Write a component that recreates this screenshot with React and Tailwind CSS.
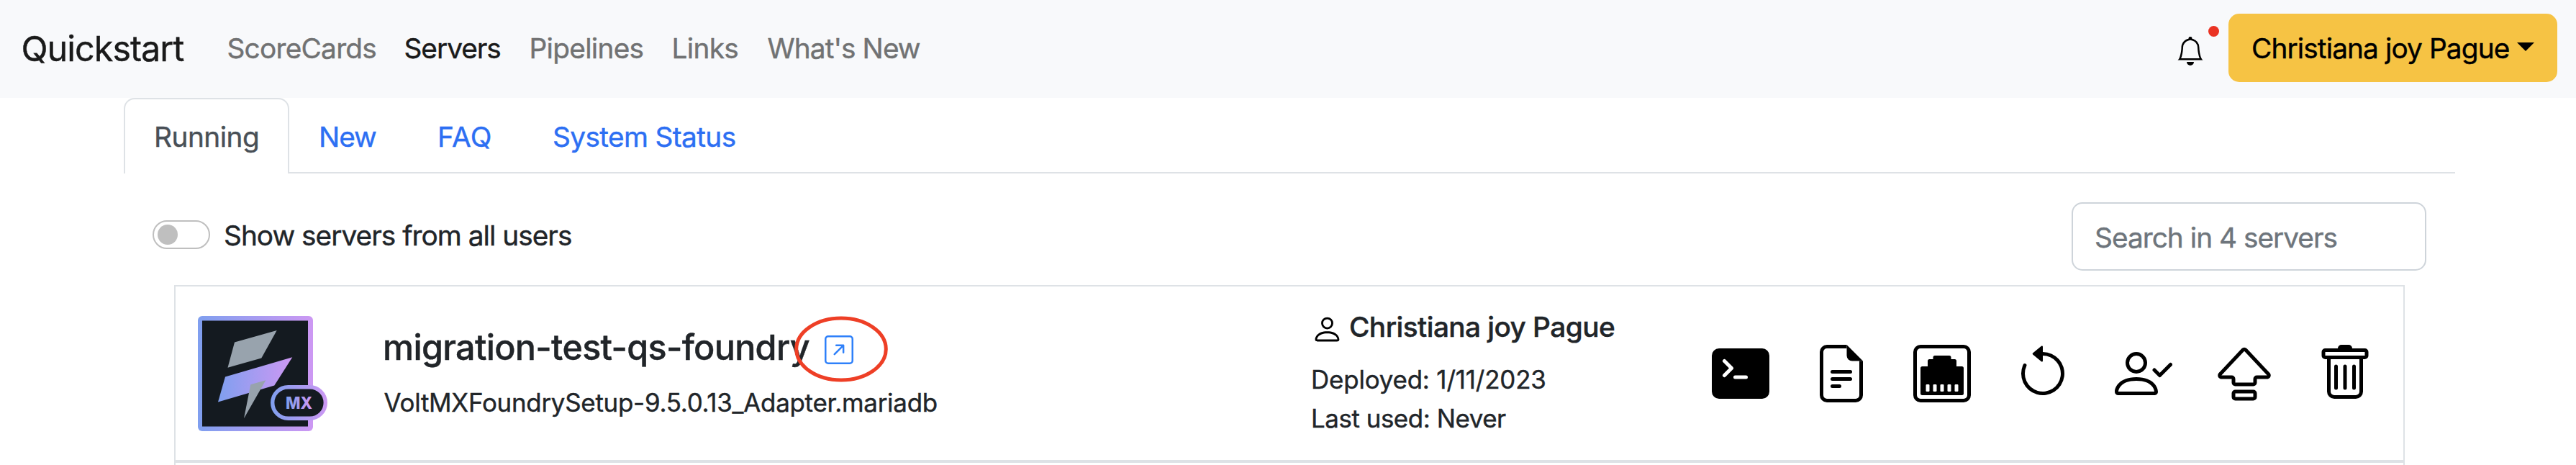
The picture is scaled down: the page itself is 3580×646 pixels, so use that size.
import {
  BsArrowCounterclockwise,
  BsArrowUpRightSquare,
  BsBell,
  BsCapslock,
  BsEthernet,
  BsPerson,
  BsTerminalFill,
  BsTrash,
} from "react-icons/bs";

function FileTextIcon() {
  return (
    <svg viewBox="0 0 16 16" fill="currentColor" className="size-20">
      <path d="M4 0h5.5v1H4a1 1 0 0 0-1 1v12a1 1 0 0 0 1 1h8a1 1 0 0 0 1-1V4.5h1V14a2 2 0 0 1-2 2H4a2 2 0 0 1-2-2V2a2 2 0 0 1 2-2z" />
      <path d="M9.5 3V0L14 4.5h-3A1.5 1.5 0 0 1 9.5 3z" />
      <path d="M5.5 7h5a.5.5 0 0 1 0 1h-5a.5.5 0 0 1 0-1zm0 2h5a.5.5 0 0 1 0 1h-5a.5.5 0 0 1 0-1zm0 2h2a.5.5 0 0 1 0 1h-2a.5.5 0 0 1 0-1z" />
    </svg>
  );
}

function PersonCheckIcon() {
  return (
    <svg viewBox="0 0 16 16" fill="currentColor" className="size-20">
      <path d="M6 8a3 3 0 1 0 0-6 3 3 0 0 0 0 6zm2-3a2 2 0 1 1-4 0 2 2 0 0 1 4 0zm4 8c0 1-1 1-1 1H1s-1 0-1-1 1-4 6-4 6 3 6 4zm-1-.004c-.001-.246-.154-.986-.832-1.664C9.516 10.68 8.289 10 6 10c-2.29 0-3.516.68-4.168 1.332-.678.678-.83 1.418-.832 1.664h10z" />
      <path d="M15.854 5.146a.5.5 0 0 1 0 .708l-3 3a.5.5 0 0 1-.708 0l-1.5-1.5a.5.5 0 0 1 .708-.708L12.5 7.793l2.646-2.647a.5.5 0 0 1 .708 0z" />
    </svg>
  );
}

function FoundryLogo() {
  return (
    <svg viewBox="0 0 180 160" className="block h-[160px] w-[180px]">
      <defs>
        <linearGradient id="frame" x1="0" y1="0" x2="160" y2="0" gradientUnits="userSpaceOnUse">
          <stop offset="0" stopColor="#7f9fef" />
          <stop offset="1" stopColor="#cd98f3" />
        </linearGradient>
        <linearGradient id="band" x1="28" y1="0" x2="131" y2="0" gradientUnits="userSpaceOnUse">
          <stop offset="0" stopColor="#7f9fef" />
          <stop offset="1" stopColor="#cd98f3" />
        </linearGradient>
        <linearGradient id="badge" x1="101" y1="0" x2="180" y2="0" gradientUnits="userSpaceOnUse">
          <stop offset="0" stopColor="#7f9fef" />
          <stop offset="1" stopColor="#cd98f3" />
        </linearGradient>
        <linearGradient id="label" x1="123" y1="0" x2="158" y2="0" gradientUnits="userSpaceOnUse">
          <stop offset="0" stopColor="#7f9fef" />
          <stop offset="1" stopColor="#cd98f3" />
        </linearGradient>
      </defs>
      <rect width="160" height="160" rx="6" fill="url(#frame)" />
      <rect x="6" y="6.5" width="147" height="147" fill="#141a20" />
      <path d="M51 36.5 109.7 20 88.3 58.5 41.5 71.7Z" fill="#98a3ad" />
      <path d="M38 84.5 131.3 57.3 106.3 96.5 28 119.5Z" fill="url(#band)" />
      <path d="M73.3 95.3 94.3 89.3 64 142.3Z" fill="#98a3ad" />
      <rect x="103.7" y="98.7" width="73.6" height="43.6" rx="21.8" fill="#141a20" stroke="url(#badge)" strokeWidth="5.4" />
      <text
        x="122"
        y="129.3"
        textLength="37"
        lengthAdjust="spacingAndGlyphs"
        fill="url(#label)"
        className="font-['Inter',sans-serif] text-[23.5px] font-extrabold [-webkit-text-stroke:0]"
      >
        MX
      </text>
    </svg>
  );
}

function Navbar() {
  return (
    <header className="flex h-[136px] items-start bg-[#f8f9fb] pl-[29.5px] leading-[60px]">
      <a className="mt-[30px] w-[286px] text-[48.5px] leading-[75px] tracking-[-0.99px] text-[#1a1a1a]">Quickstart</a>
      <nav className="mt-[36.5px] flex flex-1 text-[38.8px] text-[#717273]">
        <a className="w-[246px] tracking-[-0.77px]">ScoreCards</a>
        <a className="w-[174px] tracking-[-1.02px] text-[#1a1a1a]">Servers</a>
        <a className="w-[198px] tracking-[-0.72px]">Pipelines</a>
        <a className="w-[133px] tracking-[-0.71px]">Links</a>
        <a className="tracking-[-0.94px]">What's New</a>
      </nav>
      <div className="relative mt-[51px] mr-[33px] text-black">
        <BsBell className="size-10" />
        <span className="absolute -top-[15px] left-[45px] size-[15px] rounded-full bg-[#ea3323]" />
      </div>
      <button className="mt-[19px] mr-[26px] flex h-[95px] w-[457px] rounded-[15px] bg-[#f6c344] pt-[17.5px] pl-8 text-[38.8px] leading-[60px] tracking-[-0.9px] whitespace-nowrap text-black">
        Christiana joy Pague
        <span className="mt-[22.5px] ml-[11px] h-0 w-0 border-x-[12px] border-t-[12px] border-x-transparent border-t-black" />
      </button>
    </header>
  );
}

function Tabs() {
  return (
    <div className="mr-[168px] ml-[172px] flex h-[105px] border-b-2 border-[#dee2e6] text-[38.8px] leading-[60px] whitespace-nowrap text-[#2d6ff3]">
      <div className="h-[105px] w-[230px] rounded-t-[15px] border-2 border-b-0 border-[#dee2e6] bg-white pt-[21.5px] pl-10 tracking-[-0.51px] text-[#495057]">
        Running
      </div>
      <div className="w-[165px] pt-[23.5px] pl-[41px] tracking-[-1.07px]">New</div>
      <div className="w-[160px] pt-[23.5px] pl-[41px] tracking-[0.5px]">FAQ</div>
      <div className="pt-[23.5px] pl-[41px] tracking-[-0.63px]">System Status</div>
    </div>
  );
}

function FilterBar() {
  return (
    <div className="flex h-[155px] items-start pt-10 pr-[208px] pl-[212px]">
      <span className="mt-[25px] flex h-10 w-20 items-center rounded-full border-2 border-[#bfbfbf] pl-[5px]">
        <span className="size-7 rounded-full bg-[#bfbfbf]" />
      </span>
      <label className="mt-[15.5px] ml-[19px] flex-1 text-[38.8px] leading-[60px] tracking-[-0.99px]">
        Show servers from all users
      </label>
      <div className="h-[95px] w-[493px] rounded-[15px] border-2 border-[#ced4da] bg-white pt-[16.5px] pl-[30px] text-[38.8px] leading-[60px] tracking-[-0.99px] text-[#6e757c]">
        Search in 4 servers
      </div>
    </div>
  );
}

function ServerRow() {
  return (
    <div className="flex h-[245px] items-start border-2 border-[#dee2e6]">
      <div className="mt-[41px] ml-[31px] w-[257px]">
        <FoundryLogo />
      </div>
      <div className="w-[1290px]">
        <div className="relative mt-[47px] flex text-[48.5px] leading-[75px] font-medium tracking-[-0.7px] whitespace-nowrap">
          <span className="w-[614px]">migration-test-qs-foundry</span>
          <BsArrowUpRightSquare className="mt-[21px] size-10 text-[#2e80fa]" />
          <svg viewBox="0 0 130 92" className="absolute -top-[6.5px] left-[572px] h-[92px] w-[130px]">
            <ellipse cx="65" cy="46" rx="62.3" ry="43" fill="none" stroke="#ee3f26" strokeWidth="5" />
          </svg>
        </div>
        <div className="mt-3 ml-[1.5px] text-[34.9px] leading-[54px] tracking-[-0.25px]">
          VoltMXFoundrySetup-9.5.0.13_Adapter.mariadb
        </div>
      </div>
      <div className="w-[557px]">
        <div className="mt-[25.5px] flex text-[38.8px] leading-[60px] font-medium tracking-[-0.58px] whitespace-nowrap">
          <BsPerson className="mt-[11.5px] mr-2 size-[45px] text-black" />
          Christiana joy Pague
        </div>
        <div className="mt-[16.5px] text-[34.9px] leading-[54px] tracking-[-0.17px]">Deployed: 1/11/2023</div>
        <div className="text-[34.9px] leading-[54px] tracking-[-0.45px]">Last used: Never</div>
      </div>
      <div className="mt-[81px] flex gap-[60px] text-black">
        <BsTerminalFill className="size-20" />
        <FileTextIcon />
        <BsEthernet className="size-20" />
        <BsArrowCounterclockwise className="size-20" />
        <PersonCheckIcon />
        <BsCapslock className="size-20" />
        <BsTrash className="size-20" />
      </div>
    </div>
  );
}

export default function App() {
  return (
    <div className="h-[646px] w-[3580px] overflow-hidden bg-white font-['Inter',sans-serif] text-[#212529] [-webkit-text-stroke:0.4px]">
      <Navbar />
      <Tabs />
      <FilterBar />
      <main className="ml-[242px] w-[3100px]">
        <ServerRow />
        <div className="h-10 border-2 border-[#dee2e6]" />
      </main>
    </div>
  );
}
